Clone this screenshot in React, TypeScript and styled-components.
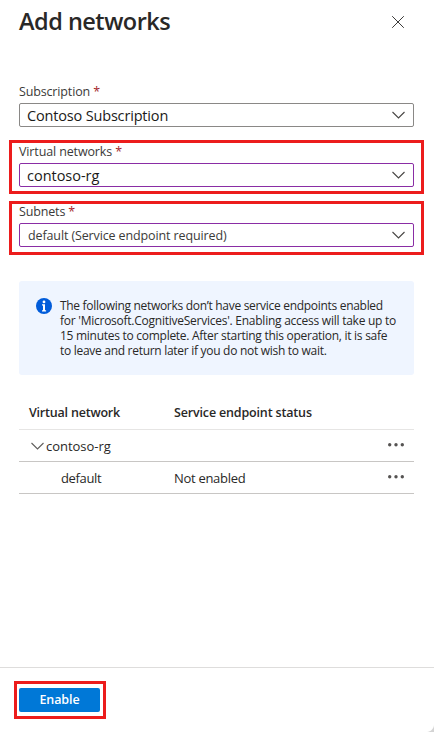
import React from "react";
import styled, { createGlobalStyle } from "styled-components";

const GlobalStyle = createGlobalStyle`
  * { box-sizing: border-box; }
  body { margin: 0; background: #fff; }
`;

const Panel = styled.main`
  position: relative;
  display: flex;
  flex-direction: column;
  width: 434px;
  height: 732px;
  overflow: hidden;
  background: #fff;
  color: #292827;
  font: 13px/18px "Open Sans", "Noto Sans", sans-serif;
  white-space: nowrap;
`;

const Header = styled.header`
  display: flex;
  justify-content: space-between;
  align-items: center;
  height: 44px;
  padding: 0 29px 0 19px;
`;

const Title = styled.h1`
  margin: 0;
  padding-bottom: 2px;
  font-size: 23.5px;
  line-height: 32px;
  font-weight: 600;
  letter-spacing: -0.5px;
`;

const CloseButton = styled.button`
  display: flex;
  padding: 0;
  border: 0;
  background: none;
`;

const Body = styled.div`
  flex: 1;
  padding: 39px 20px 0 19px;
`;

const Fields = styled.div`
  display: flex;
  flex-direction: column;
  gap: 16px;
`;

const Field = styled.div<{ $frame?: string }>`
  position: relative;
  height: 44px;
  &::after {
    content: ${(p) => (p.$frame ? '""' : "none")};
    position: absolute;
    inset: ${(p) => p.$frame};
    border: 3px solid #ec1c1c;
    pointer-events: none;
  }
`;

const Label = styled.div<{ $spacing: number }>`
  height: 20px;
  line-height: 17px;
  font-size: 12.5px;
  color: #3b3a39;
  letter-spacing: ${(p) => p.$spacing}px;
`;

const Required = styled.span`
  color: #a4262c;
`;

const Select = styled.div<{ $edited?: boolean }>`
  display: flex;
  align-items: center;
  justify-content: space-between;
  height: 24px;
  padding: 0 8px 0 7px;
  border: 1px solid ${(p) => (p.$edited ? "#8a2da5" : "#8a8886")};
  border-radius: 2px;
`;

const Value = styled.span<{ $small?: boolean; $spacing: number }>`
  padding: 2px 0 0 ${(p) => (p.$small ? 1 : 0)}px;
  font-size: ${(p) => (p.$small ? 12.5 : 14.5)}px;
  color: ${(p) => (p.$small ? "#3b3a39" : "#1b1a19")};
  letter-spacing: ${(p) => p.$spacing}px;
`;

const Notice = styled.section`
  display: flex;
  gap: 8px;
  height: 94px;
  margin-top: 34px;
  padding: 17px 0 0 17px;
  border-radius: 3px;
  background: #eff5ff;
  svg { flex: none; }
`;

const NoticeText = styled.div`
  display: flex;
  flex-direction: column;
  font-size: 12px;
  line-height: 15px;
`;

const Line = styled.span<{ $spacing: number }>`
  letter-spacing: ${(p) => p.$spacing}px;
`;

const Table = styled.div`
  margin-top: 20px;
`;

const Row = styled.div<{ $head?: boolean }>`
  display: grid;
  grid-template-columns: 155px 1fr 27px;
  align-items: center;
  height: ${(p) => (p.$head ? 35 : 32)}px;
  padding-top: ${(p) => (p.$head ? 2 : 0)}px;
  border-bottom: 1px solid ${(p) => (p.$head ? "#e6e5e4" : "#c8c6c4")};
  font-size: ${(p) => (p.$head ? 12.5 : 13)}px;
  font-weight: ${(p) => (p.$head ? 600 : 400)};
  > svg { margin-bottom: 2px; }
`;

const Cell = styled.span<{ $indent?: number; $spacing: number }>`
  display: flex;
  align-items: center;
  gap: 2px;
  padding-left: ${(p) => p.$indent ?? 0}px;
  letter-spacing: ${(p) => p.$spacing}px;
`;

const Footer = styled.footer`
  height: 65px;
  padding: 20px 19px 0;
  border-top: 1px solid #dedddc;
`;

const ActionFrame = styled.div`
  position: relative;
  width: 81px;
  &::after {
    content: "";
    position: absolute;
    inset: -7px -6px -7px -5px;
    border: 3px solid #ec1c1c;
    pointer-events: none;
  }
`;

const PrimaryButton = styled.button`
  display: block;
  width: 81px;
  height: 24px;
  padding: 0;
  border: 0;
  border-radius: 2px;
  background: #0078d7;
  color: #fff;
  font: 600 12.5px/22px "Open Sans", "Noto Sans", sans-serif;
  letter-spacing: -0.1px;
`;

const Corner = styled.svg`
  position: absolute;
  right: 0;
  bottom: 0;
`;

const Chevron = ({ color = "#484644" }: { color?: string }) => (
  <svg width="13" height="8" viewBox="0 0 13 8" fill="none">
    <path d="M.5 1 6.5 7 12.5 1" stroke={color} strokeWidth="1.1" />
  </svg>
);

const More = () => (
  <svg width="18" height="6" viewBox="0 0 18 6" fill="#555352">
    <circle cx="2.7" cy="2.7" r="1.7" />
    <circle cx="9" cy="2.7" r="1.7" />
    <circle cx="15.3" cy="2.7" r="1.7" />
  </svg>
);

const InfoIcon = () => (
  <svg width="16" height="16" viewBox="0 0 16 16">
    <circle cx="8" cy="8" r="8" fill="#015cda" />
    <circle cx="8" cy="3.9" r="1.4" fill="#fff" />
    <path d="M6 6.3h3v6h1.1v1.2H6v-1.2h1V7.5H6z" fill="#fff" />
  </svg>
);

const noticeLines = [
  { text: "The following networks don’t have service endpoints enabled", spacing: -0.3 },
  { text: "for 'Microsoft.CognitiveServices'. Enabling access will take up to", spacing: -0.25 },
  { text: "15 minutes to complete. After starting this operation, it is safe", spacing: -0.275 },
  { text: "to leave and return later if you do not wish to wait.", spacing: -0.29 },
];

export default function App() {
  return (
    <Panel>
      <GlobalStyle />
      <Header>
        <Title>Add networks</Title>
        <CloseButton aria-label="Close">
          <svg width="14" height="14" viewBox="0 0 14 14" fill="none">
            <path d="M1.2 1.2 12.8 12.8M12.8 1.2 1.2 12.8" stroke="#3b3a39" strokeWidth="1" />
          </svg>
        </CloseButton>
      </Header>
      <Body>
        <Fields>
          <Field>
            <Label $spacing={-0.15}>Subscription <Required>*</Required></Label>
            <Select>
              <Value $spacing={-0.17}>Contoso Subscription</Value>
              <Chevron />
            </Select>
          </Field>
          <Field $frame="-3px -10px -7px -10px">
            <Label $spacing={-0.13}>Virtual networks <Required>*</Required></Label>
            <Select $edited>
              <Value $spacing={-0.02}>contoso-rg</Value>
              <Chevron />
            </Select>
          </Field>
          <Field $frame="-2px -10px -8px -10px">
            <Label $spacing={-0.15}>Subnets <Required>*</Required></Label>
            <Select $edited>
              <Value $small $spacing={-0.12}>default (Service endpoint required)</Value>
              <Chevron />
            </Select>
          </Field>
        </Fields>
        <Notice>
          <InfoIcon />
          <NoticeText>
            {noticeLines.map((line) => (
              <Line key={line.text} $spacing={line.spacing}>{line.text}</Line>
            ))}
          </NoticeText>
        </Notice>
        <Table>
          <Row $head>
            <Cell $indent={10} $spacing={-0.2}>Virtual network</Cell>
            <Cell $spacing={-0.16}>Service endpoint status</Cell>
          </Row>
          <Row>
            <Cell $indent={12} $spacing={-0.02}><Chevron color="#605e5c" />contoso-rg</Cell>
            <span />
            <More />
          </Row>
          <Row>
            <Cell $indent={42} $spacing={-0.35}>default</Cell>
            <Cell $spacing={-0.3}>Not enabled</Cell>
            <More />
          </Row>
        </Table>
      </Body>
      <Footer>
        <ActionFrame>
          <PrimaryButton>Enable</PrimaryButton>
        </ActionFrame>
      </Footer>
      <Corner width="7" height="7" viewBox="0 0 8 8">
        <path d="M8 0v8H0C4.5 7.5 7.5 4.5 8 0Z" fill="#d4d4d4" />
      </Corner>
    </Panel>
  );
}
